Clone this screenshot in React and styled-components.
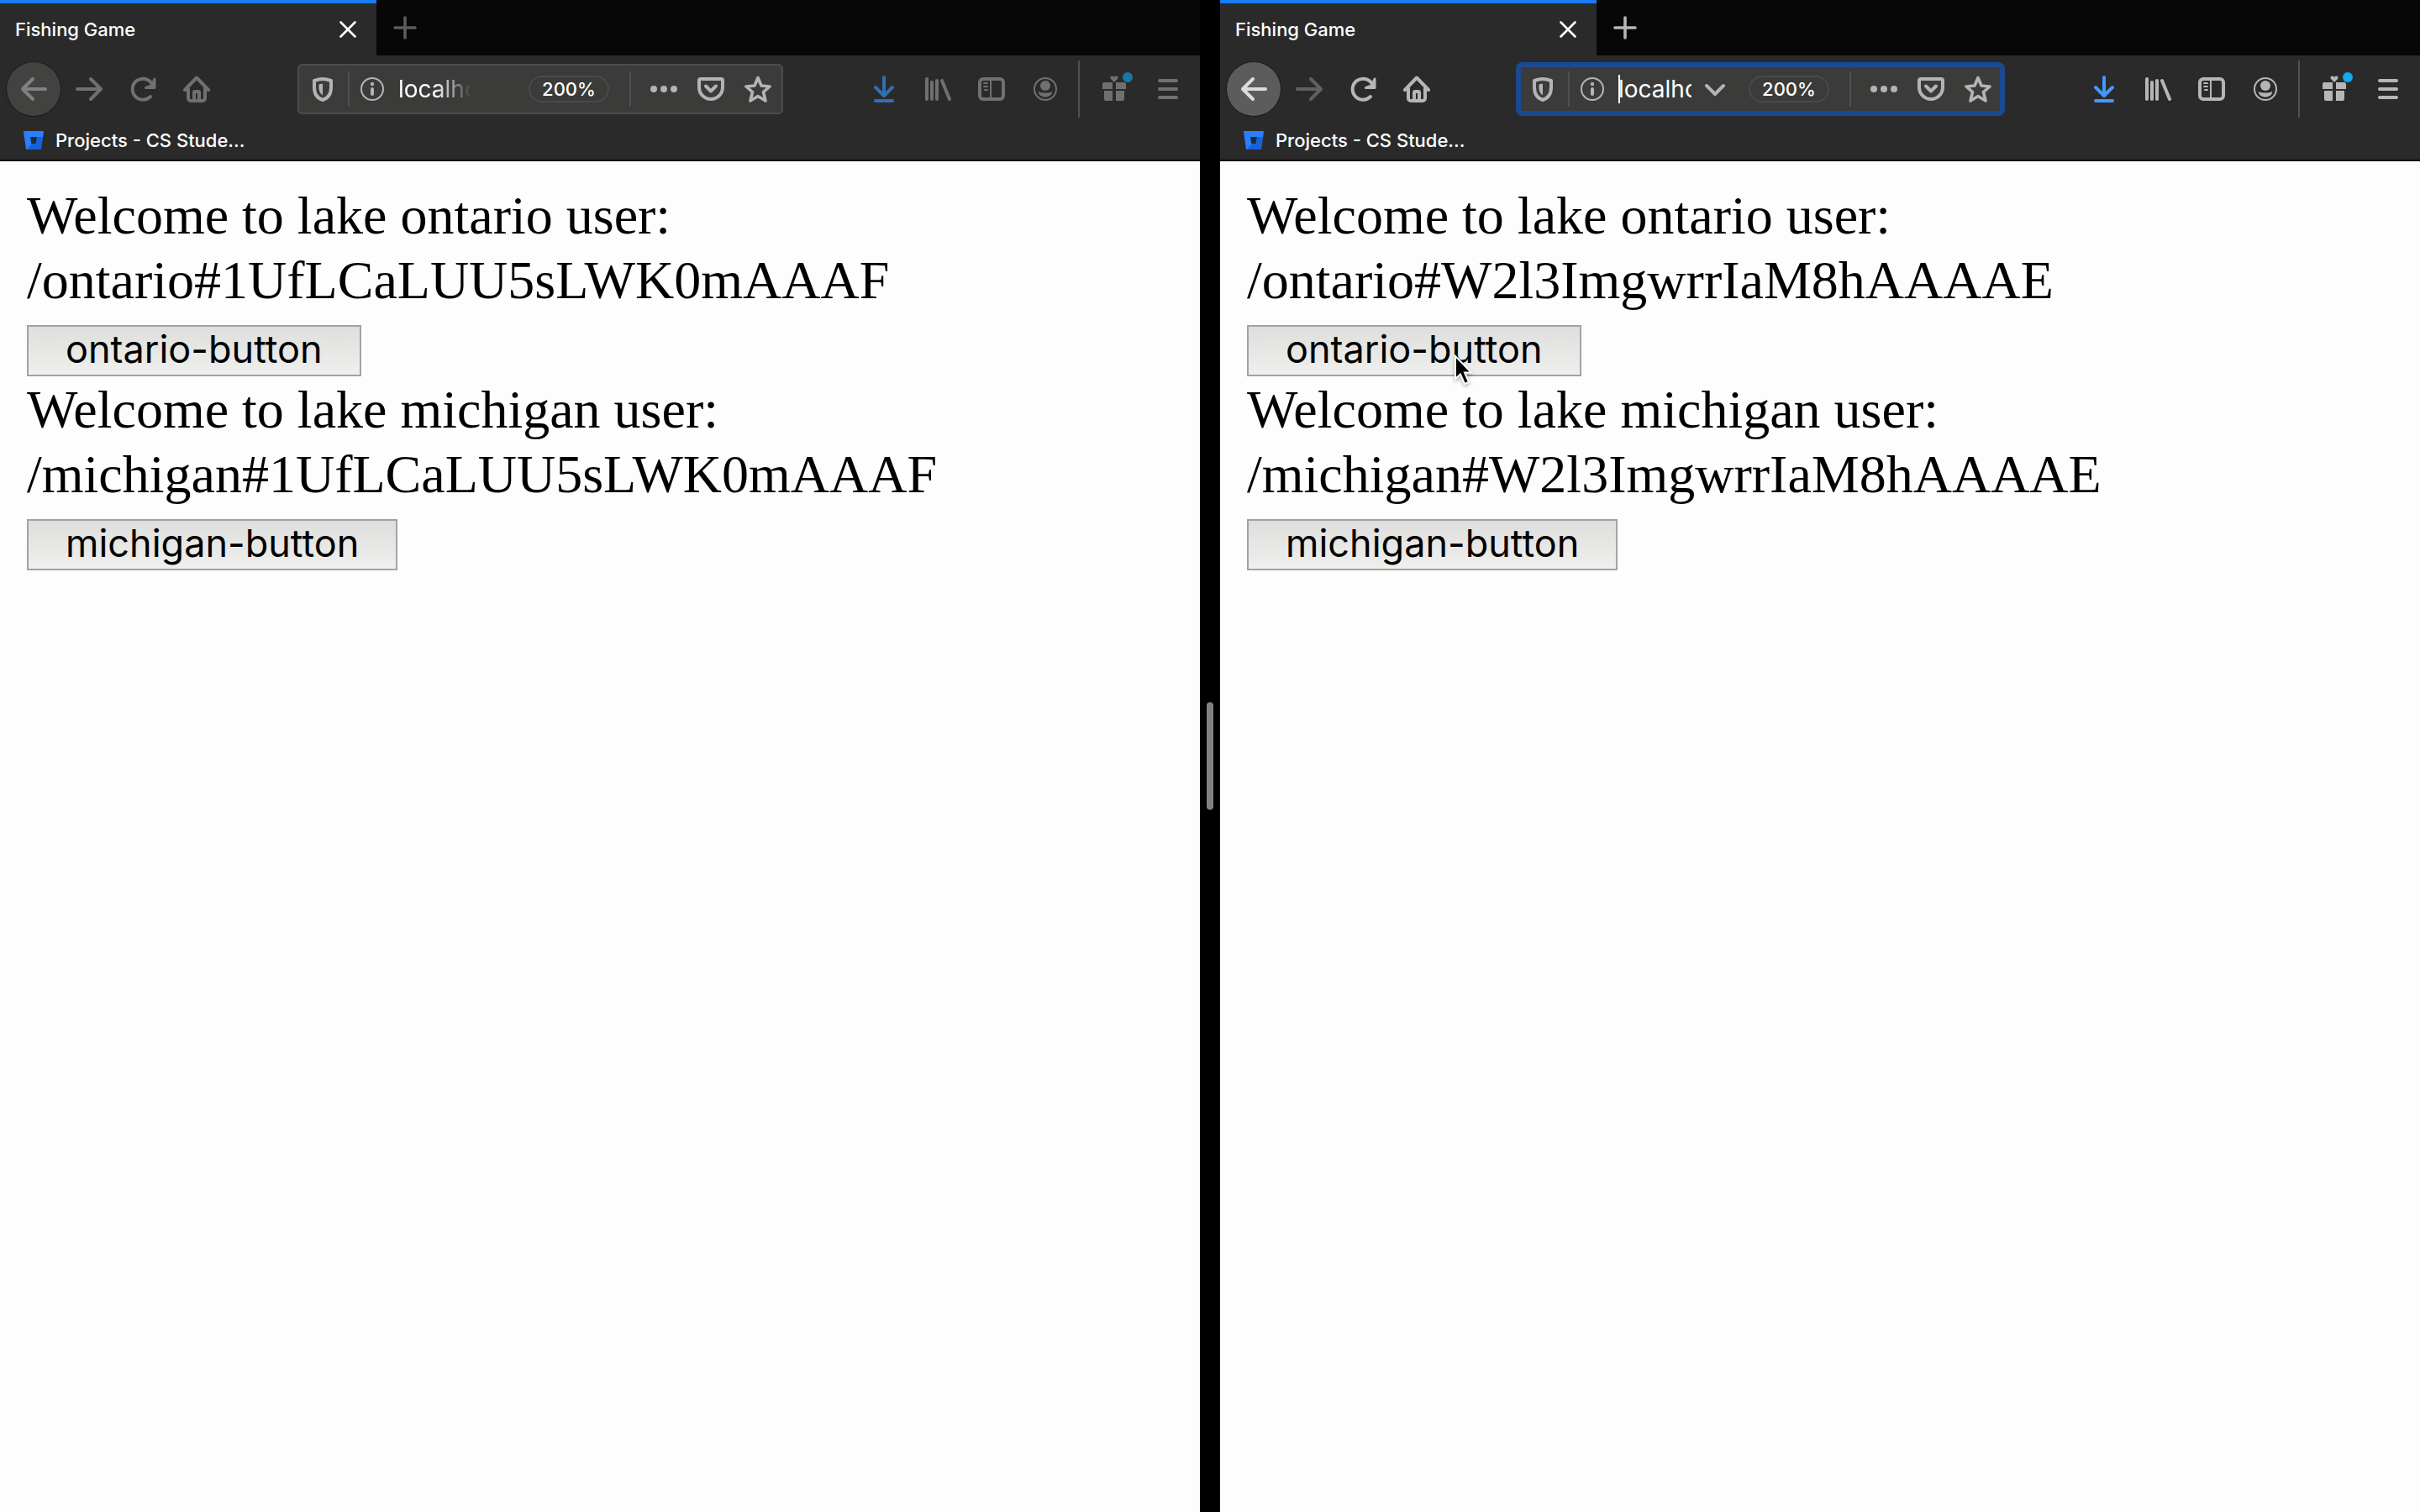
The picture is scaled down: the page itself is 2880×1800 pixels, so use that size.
import React from "react";
import styled, { createGlobalStyle, css } from "styled-components";

const Global = createGlobalStyle`
  *, *::before, *::after { box-sizing: border-box; }
  html, body, #root { height: 100%; }
  body { margin: 0; background: #000; }
  button, input { font: inherit; color: inherit; margin: 0; }
`;

const ui = css`
  font-family: Inter, "Liberation Sans", sans-serif;
  font-size: 22px;
  line-height: 28px;
  font-weight: 500;
  color: #fff;
`;

const Screen = styled.div`
  display: grid;
  grid-template-columns: minmax(0, 1fr) 24px minmax(0, 1fr);
  min-height: 100%;
`;

const Divider = styled.div`
  display: flex;
  align-items: center;
  justify-content: center;
  background: #000;
`;

const Grip = styled.div`
  width: 8px;
  height: 128px;
  border-radius: 4px;
  background: #808080;
`;

const Window = styled.section`
  display: flex;
  flex-direction: column;
  background: #fdfdfd;
`;

const Chrome = styled.header`
  ${ui}
  background: #2a2a2a;
  border-bottom: 2px solid #0a0a0a;
`;

const TabStrip = styled.div`
  display: flex;
  height: 66px;
  background: #070707;
`;

const Tab = styled.div`
  display: flex;
  align-items: center;
  justify-content: space-between;
  width: 448px;
  padding: 0 20px 0 18px;
  border-top: 4px solid #1a7cf5;
  background: #2a2a2a;
`;

const IconButton = styled.button`
  display: flex;
  align-items: center;
  justify-content: center;
  flex: none;
  width: ${(p) => p.$width || 64}px;
  height: ${(p) => p.$height || 64}px;
  padding: 0;
  border: 0;
  background: none;
  color: ${(p) => p.$color || "inherit"};
`;

const BackButton = styled(IconButton)`
  margin-right: 2px;
  border-radius: 50%;
  background: ${(p) => p.$fill};
  box-shadow: 0 0 0 1px #1c1c1c;
`;

const HistoryButton = styled(IconButton)`
  margin-right: 12px;
`;

const NavBar = styled.nav`
  display: flex;
  align-items: center;
  height: 80px;
  padding: 0 6px 0 8px;
  color: ${(p) => (p.$active ? "#b6b6b6" : "#707070")};
`;

const UrlBar = styled.div`
  display: flex;
  align-items: center;
  flex: 1;
  min-width: 0;
  height: 60px;
  margin: 0 88px;
  border-radius: 6px;
  background: #3b3b3a;
  color: #b4b4b4;
  box-shadow: ${(p) =>
    p.$focused
      ? "inset 0 0 0 4px #1b4a92, 0 0 0 2px #1b4a92"
      : "inset 0 0 0 2px #4c4c4e"};
`;

const Rule = styled.span`
  flex: none;
  width: 2px;
  height: ${(p) => p.$height}px;
  background: #505052;
`;

const ActionsRule = styled(Rule)`
  margin-right: 9px;
`;

const ToolbarRule = styled(Rule)`
  margin: 0 9px 0 7px;
`;

const Address = styled.input`
  flex: 1;
  width: 0;
  min-width: 0;
  height: 40px;
  padding: 0;
  border: 0;
  outline: 0;
  background: none;
  color: #fff;
  font-size: 28px;
  font-weight: 400;
  ${(p) =>
    p.$faded &&
    css`
      mask-image: linear-gradient(to right, #000 50%, transparent 100%);
    `}
`;

const AddressBox = styled.label`
  display: flex;
  align-items: center;
  flex: 1;
  min-width: 0;
  height: 34px;
  margin-left: 4px;
`;

const Caret = styled.span`
  flex: none;
  width: 2px;
  height: 34px;
  margin-right: -2px;
  background: #fff;
`;

const ZoomButton = styled.button`
  flex: none;
  width: 96px;
  height: 32px;
  margin-right: 24px;
  padding: 0;
  border: 2px solid #4a4a4c;
  border-radius: 16px;
  background: none;
  color: #fff;
`;

const BookmarkBar = styled.div`
  display: flex;
  height: 44px;
  padding-left: 28px;
`;

const Bookmark = styled.a`
  display: flex;
  align-items: center;
  gap: 14px;
  height: 42px;
  color: #fff;
  text-decoration: none;
`;

const Page = styled.main`
  flex: 1;
  padding: 26px 32px;
  font-family: "Liberation Serif", "Times New Roman", serif;
  font-size: 64px;
  line-height: 77px;
  color: #000;
`;

const Line = styled.div`
  overflow-wrap: anywhere;
`;

const ActionRow = styled.div`
  position: relative;
  display: flex;
  padding: 15px 0 1px;
`;

const Action = styled.button`
  height: 61px;
  padding: 0 44px 3px;
  border: 2px solid #a2a2a6;
  background: linear-gradient(#dededc, #efefed);
  color: #000;
  font-family: Inter, "Liberation Sans", sans-serif;
  font-size: 45px;
  line-height: 52px;
`;

const Pointer = styled.svg`
  position: absolute;
  left: 245px;
  top: 50px;
  width: 28px;
  height: 40px;
  filter: drop-shadow(0 2px 2px rgba(0, 0, 0, 0.3));
`;

const Svg = ({ size = 32, children, ...rest }) => (
  <svg
    width={size}
    height={size}
    viewBox={`0 0 ${size} ${size}`}
    fill="none"
    stroke="currentColor"
    strokeWidth="4"
    strokeLinecap="round"
    strokeLinejoin="round"
    aria-hidden="true"
    {...rest}
  >
    {children}
  </svg>
);

const CloseIcon = () => (
  <Svg size={28} strokeWidth="2.6">
    <path d="M5.5 5.5l17 17M22.5 5.5l-17 17" />
  </Svg>
);
const PlusIcon = () => (
  <Svg strokeWidth="3.6">
    <path d="M16 4v24M4 16h24" />
  </Svg>
);
const BackIcon = () => (
  <Svg>
    <path d="M30 16H3M15 4L3 16l12 12" />
  </Svg>
);
const ForwardIcon = () => (
  <Svg>
    <path d="M2 16h27M18 4l12 12-12 12" />
  </Svg>
);
const ReloadIcon = () => (
  <Svg>
    <path d="M25 25A12.500 12.500 0 1 1 27 10" />
    <path d="M30 4v10.500H19.500l7-2.500z" fill="currentColor" strokeWidth="3" />
  </Svg>
);
const HomeIcon = () => (
  <Svg>
    <path d="M2 17L16 2.500 30 17M6 15v12a3 3 0 0 0 3 3h14a3 3 0 0 0 3-3V15" />
    <path d="M13 29V20q0-1 1-1h4q1 0 1 1v9" />
  </Svg>
);
const ShieldIcon = () => (
  <Svg>
    <path d="M16 4C12 4 9 5 6 6v8c0 8 4 13 10 15 6-2 10-7 10-15V6c-3-1-6-2-10-2z" />
    <path d="M16 9.500v14c-3-2-4.500-5-4.500-9v-4z" fill="currentColor" stroke="none" />
  </Svg>
);
const InfoIcon = () => (
  <Svg>
    <circle cx="16" cy="16" r="13" strokeWidth="2" />
    <path d="M16 16v6" />
    <circle cx="16" cy="10" r="2.200" fill="currentColor" stroke="none" />
  </Svg>
);
const ChevronIcon = () => (
  <Svg>
    <path d="M6 12l10 10 10-10" />
  </Svg>
);
const DotsIcon = () => (
  <Svg stroke="none" fill="currentColor">
    <circle cx="4" cy="16" r="4" />
    <circle cx="16" cy="16" r="4" />
    <circle cx="28" cy="16" r="4" />
  </Svg>
);
const PocketIcon = () => (
  <Svg>
    <path d="M4 4h24a2 2 0 0 1 2 2v8a14 14 0 0 1-28 0V6a2 2 0 0 1 2-2z" />
    <path d="M10 12.500l6 6 6-6" />
  </Svg>
);
const StarIcon = () => (
  <Svg>
    <path d="M16 2.500l4 9.500 10 1-7.500 6.500 2.500 10.500-9-5.500-9 5.500 2.500-10.500L2 13l10-1z" strokeWidth="3.600" />
  </Svg>
);
const DownloadIcon = () => (
  <Svg>
    <path d="M16 2v22M6 14l10 10 10-10M6 30h20" />
  </Svg>
);
const LibraryIcon = () => (
  <Svg>
    <path d="M3 4v24M9 8v20M15 6v22M21 6l9 22" />
  </Svg>
);
const SidebarIcon = () => (
  <Svg>
    <rect x="2" y="4" width="28" height="24" rx="4" />
    <path d="M15 4v24M7 9h4M7 13h4M8 17h3" strokeWidth="2" />
  </Svg>
);
const AccountIcon = () => (
  <Svg>
    <circle cx="16" cy="16" r="13" strokeWidth="2" />
    <circle cx="16" cy="12" r="6" fill="currentColor" stroke="none" />
    <path d="M8 19c2 1 4.500 1.500 8 1.500s6-.5 8-1.500c.5 4-4 6.500-8 6.500S7.500 23 8 19z" fill="currentColor" stroke="none" />
  </Svg>
);
const GiftIcon = ({ dot }) => (
  <Svg size={44} fill="currentColor" stroke="none">
    <path d="M22 14l-4-4c-2-3 2-5 4-2 2-3 6-1 4 2z" />
    <path d="M10 14h10v8H8v-6q0-2 2-2zM24 14h10q2 0 2 2v6H24zM10 24h10v12h-8q-2 0-2-2zM24 24h10v10q0 2-2 2h-8z" />
    <circle cx="38" cy="8" r="6" fill={dot} />
  </Svg>
);
const MenuIcon = () => (
  <Svg>
    <path d="M6 6h20M6 16h20M6 26h20" />
  </Svg>
);
const BucketIcon = () => (
  <svg width="24" height="24" viewBox="0 0 24 24" aria-hidden="true">
    <path d="M1 1h22a1 1 0 0 1 1 1l-3 20a1 1 0 0 1-1 1H4a1 1 0 0 1-1-1L0 2a1 1 0 0 1 1-1z" fill="#2a7fff" />
    <path d="M16 8h7l-2 14a1 1 0 0 1-1 1H4l6-7h5z" fill="#1257cf" opacity=".75" />
    <path d="M8 8h8l-1.300 8H9.300z" fill="#222a3a" />
  </svg>
);

function Greeting({ lake, id, pointer }) {
  return (
    <>
      <Line>Welcome to lake {lake} user:</Line>
      <Line>{`/${lake}#${id}`}</Line>
      <ActionRow>
        <Action type="button">{lake}-button</Action>
        {pointer && (
          <Pointer viewBox="0 0 28 40" aria-hidden="true">
            <path
              d="M3 2v27l6-5.500 5 11.500 5-2-5-11.500h8z"
              fill="#000"
              stroke="#fff"
              strokeWidth="2"
            />
          </Pointer>
        )}
      </ActionRow>
    </>
  );
}

function Browser({ active, name, userId }) {
  return (
    <Window aria-label={name}>
      <Chrome>
        <TabStrip>
          <Tab>
            <span>Fishing Game</span>
            <IconButton $width={28} $height={28} aria-label="Close tab">
              <CloseIcon />
            </IconButton>
          </Tab>
          <IconButton $width={68} $height={66} $color={active ? "#b6b6b6" : "#5c5c5c"} aria-label="New tab">
            <PlusIcon />
          </IconButton>
        </TabStrip>
        <NavBar $active={active}>
          <BackButton $fill={active ? "#5c5c5c" : "#424240"} $color={active ? "#dcdcdc" : "#808080"} aria-label="Back">
            <BackIcon />
          </BackButton>
          <IconButton $color={active ? "#606060" : undefined} aria-label="Forward">
            <ForwardIcon />
          </IconButton>
          <IconButton aria-label="Reload"><ReloadIcon /></IconButton>
          <IconButton aria-label="Home"><HomeIcon /></IconButton>
          <UrlBar $focused={active}>
            <IconButton $width={60} $height={44} aria-label="Tracking protection"><ShieldIcon /></IconButton>
            <Rule $height={42} />
            <IconButton $width={54} $height={44} aria-label="Site information"><InfoIcon /></IconButton>
            <AddressBox>
              {active && <Caret />}
              <Address aria-label="Address" defaultValue="localhost" $faded={!active} />
            </AddressBox>
            <HistoryButton $width={56} $height={44} $color={active ? undefined : "transparent"} aria-label="Show history">
              <ChevronIcon />
            </HistoryButton>
            <ZoomButton type="button">200%</ZoomButton>
            <ActionsRule $height={42} />
            <IconButton $width={60} $height={44} aria-label="Page actions"><DotsIcon /></IconButton>
            <IconButton $width={52} $height={44} aria-label="Save to Pocket"><PocketIcon /></IconButton>
            <IconButton $width={60} $height={44} aria-label="Bookmark this page"><StarIcon /></IconButton>
          </UrlBar>
          <IconButton $color={active ? "#4497ff" : "#336eb0"} aria-label="Downloads"><DownloadIcon /></IconButton>
          <IconButton aria-label="Library"><LibraryIcon /></IconButton>
          <IconButton aria-label="Sidebars"><SidebarIcon /></IconButton>
          <IconButton aria-label="Account"><AccountIcon /></IconButton>
          <ToolbarRule $height={68} />
          <IconButton aria-label="What's new"><GiftIcon dot={active ? "#10a9f2" : "#1878a4"} /></IconButton>
          <IconButton aria-label="Menu"><MenuIcon /></IconButton>
        </NavBar>
        <BookmarkBar>
          <Bookmark href="#projects">
            <BucketIcon />
            Projects - CS Stude...
          </Bookmark>
        </BookmarkBar>
      </Chrome>
      <Page>
        <Greeting lake="ontario" id={userId} pointer={active} />
        <Greeting lake="michigan" id={userId} />
      </Page>
    </Window>
  );
}

export default function App() {
  return (
    <>
      <Global />
      <Screen>
        <Browser name="Left window" userId="1UfLCaLUU5sLWK0mAAAF" />
        <Divider><Grip /></Divider>
        <Browser name="Right window" userId="W2l3ImgwrrIaM8hAAAAE" active />
      </Screen>
    </>
  );
}
